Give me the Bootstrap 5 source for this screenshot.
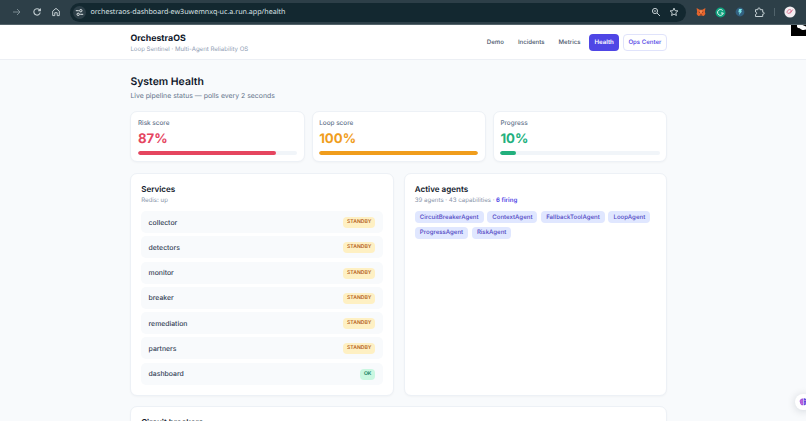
<!DOCTYPE html>
<html lang="en">

<head>
    <meta charset="UTF-8" />
    <meta name="viewport" content="width=device-width, initial-scale=1" />
    <title>OrchestraOS - System Health</title>
    <link href="https://cdn.jsdelivr.net/npm/bootstrap@5.3.3/dist/css/bootstrap.min.css" rel="stylesheet" />
    <style>
        body {
            background: #f8fafc;
            color: #1e293b;
            font-family: Inter, 'Liberation Sans', sans-serif;
            font-size: 7px;
            line-height: 10px;
            height: 421px;
            overflow: hidden;
            text-rendering: geometricPrecision;
        }

        /* Browser toolbar */
        .browser-bar {
            height: 25px;
            background: #2d3f48;
            border-bottom: 1px solid #53636a;
            color: #c3ced2;
        }

        .browser-bar svg {
            display: block;
            flex: none;
        }

        .browser-tools {
            width: 70px;
            padding-left: 11px;
            gap: 9.5px;
        }

        .address-bar {
            width: 616px;
            height: 19px;
            padding: 0 7.5px 0 3px;
            background: #132830;
            border-radius: 10px;
        }

        .site-info {
            width: 13px;
            height: 13px;
            background: #2d3f48;
            border-radius: 50%;
        }

        .url-text {
            margin-left: 4.5px;
            color: #d8e0e3;
            font: 7.13px/12px 'Noto Sans', 'Open Sans', sans-serif;
            white-space: nowrap;
        }

        .extensions {
            padding-left: 10px;
            gap: 9px;
        }

        /* Page header */
        .site-header {
            height: 35px;
            background: #fff;
            border-bottom: 1px solid #eceff4;
        }

        .page-wrap {
            width: 536.8px;
            margin-left: 130.4px;
        }

        .brand-name {
            padding-top: 2px;
            color: #0f172a;
            font-size: 8.8px;
            line-height: 12px;
            font-weight: 700;
        }

        .brand-sub {
            color: #8f9db3;
            font-size: 6.1px;
            line-height: 9px;
        }

        .site-nav {
            gap: 3.6px;
        }

        .site-nav .nav-link {
            color: #475569;
            font-size: 6.1px;
            line-height: 9px;
            font-weight: 500;
            padding: 3px 4.2px;
            border: 1px solid transparent;
            border-radius: 4px;
        }

        .site-nav .nav-link.active {
            background: #4f46e5;
            color: #fff;
            font-weight: 600;
        }

        .site-nav .nav-link.ops-link {
            color: #4f46e5;
            border-color: #e0e3fb;
            padding: 3px 4.8px;
        }

        /* Headings */
        h1 {
            margin: 14px 0 0;
            color: #0f172a;
            font-size: 10.45px;
            line-height: 15px;
            font-weight: 600;
        }

        .lead-line {
            margin-top: 1.5px;
            color: #64748b;
            font-size: 6.9px;
        }

        h2 {
            margin: 0;
            color: #0f172a;
            font-size: 8.05px;
            line-height: 12px;
            font-weight: 600;
        }

        .panel {
            background: #fff;
            border: 1px solid #edf1f6;
            border-radius: 7px;
            box-shadow: 0 1px 2px rgba(15, 23, 42, .03);
        }

        /* Score cards */
        .score-grid {
            display: grid;
            grid-template-columns: repeat(3, 1fr);
            gap: 7px;
            margin-top: 10px;
        }

        .score-card {
            height: 51.5px;
            padding: 7px 6.5px 0;
        }

        .score-label {
            color: #64748b;
            font-size: 6.4px;
            line-height: 9px;
            font-weight: 500;
        }

        .score-value {
            margin-top: 4.5px;
            font-size: 13.2px;
            line-height: 15px;
            font-weight: 700;
        }

        .score-card .progress {
            height: 3.5px;
            margin-top: 4.3px;
            background: #f1f5f9;
            border-radius: 4px;
        }

        .score-card .progress-bar {
            border-radius: 4px;
        }

        .risk { color: #e5455f; }
        .loop { color: #f09d1c; }
        .gain { color: #22b07d; }
        .bg-risk { background: #e5455f; }
        .bg-loop { background: #f09d1c; }
        .bg-gain { background: #22b07d; }

        /* Services and agents */
        .panel-grid {
            display: grid;
            grid-template-columns: 1fr 1fr;
            gap: 10.5px;
            margin-top: 10.5px;
        }

        .panel-grid .panel {
            height: 223px;
            padding: 9.7px 9.8px 0;
        }

        .panel-note {
            margin-top: .8px;
            color: #8794a9;
            font-size: 6.12px;
            line-height: 10px;
        }

        .firing {
            color: #4f46e5;
            font-weight: 600;
        }

        .service-list {
            gap: 3.25px;
            margin-top: 5.1px;
        }

        .service-row {
            height: 22px;
            padding: 1px 7.4px 0;
            background: #f8fafc;
            border-radius: 5px;
            color: #334155;
            font-size: 6.87px;
            font-weight: 500;
        }

        .status-pill {
            padding: 1px 3.9px;
            border-radius: 4px;
            font-size: 5.1px;
            line-height: 9px;
            font-weight: 600;
        }

        .standby {
            background: #fef0c3;
            color: #b4611c;
        }

        .ok {
            background: #c9f7e0;
            color: #047857;
        }

        .agent-list {
            gap: 3.7px;
            margin-top: 5.1px;
        }

        .agent-tag {
            padding: 1.5px 5px;
            background: #e0e7ff;
            border-radius: 4px;
            color: #5148c4;
            font-size: 6.1px;
            line-height: 9px;
            font-weight: 500;
        }

        .circuit-panel {
            height: 60px;
            margin-top: 10.5px;
            padding: 9.3px 9.8px 0;
        }

        /* Widgets floating over the page edge */
        .corner-widget {
            position: absolute;
            top: 25px;
            right: 0;
        }

        .chat-bubble {
            position: absolute;
            top: 394px;
            right: -6px;
            width: 17px;
            height: 16px;
            background: #fff;
            border-radius: 8px;
            box-shadow: 0 1px 9px rgba(15, 23, 42, .16);
        }
    </style>
</head>

<body class="position-relative">

    <div class="browser-bar d-flex align-items-center">
        <div class="browser-tools d-flex align-items-center">
            <svg width="11" height="10" viewBox="0 0 11 10" fill="none" stroke="#83949b" stroke-width=".9"><path d="M2 5h7M6 2l3 3-3 3" /></svg>
            <svg width="10" height="10" viewBox="0 0 10 10" fill="none" stroke="#c3ced2" stroke-width="1.1"><path d="M8.2 5.5A3.2 3.2 0 1 1 7.4 2.7L8.2 3.6M8.4 1.4v2.4H6" /></svg>
            <svg width="10" height="10" viewBox="0 0 10 10" fill="none" stroke="#c3ced2" stroke-width="1"><path d="M1.7 4.1 5 1.4l3.3 2.7v4.5H6.2V5.7H3.8v2.9H1.7z" /></svg>
        </div>
        <div class="address-bar d-flex align-items-center">
            <div class="site-info d-flex align-items-center justify-content-center">
                <svg width="9" height="9" viewBox="0 0 9 9" fill="none" stroke="#e1e8ea" stroke-width="1"><path d="M.8 2.7h3M5.2 6.3h3" /><circle cx="5.8" cy="2.7" r="1.2" /><circle cx="3.2" cy="6.3" r="1.2" /></svg>
            </div>
            <div class="url-text">orchestraos-dashboard-ew3uwemnxq-uc.a.run.app/health</div>
            <div class="d-flex align-items-center gap-2 ms-auto">
                <svg width="10" height="10" viewBox="0 0 10 10" fill="none" stroke="#c3ced2" stroke-width="1"><circle cx="4" cy="4" r="2.6" /><path d="M6 6l3 3M2.8 4h2.4" /></svg>
                <svg width="10" height="10" viewBox="0 0 10 10" fill="none" stroke="#d3dcdf" stroke-width=".9"><path d="M5 1.1l1.1 2.6 2.8.2-2.1 1.9.6 2.7L5 7.1 2.6 8.5l.6-2.7L1.1 3.9l2.8-.2z" /></svg>
            </div>
        </div>
        <div class="extensions d-flex align-items-center">
            <svg width="10" height="10" viewBox="0 0 10 10"><path fill="#e5652d" d="M.6 1l3 1.7h2.8l3-1.7-.5 3.7.5 2.3-1.6 2-2-.5H4.2l-2 .5L.6 7l.5-2.3z" /><path fill="#5b2b20" d="M2.2 4.6l1.7.7-.3.8zM7.8 4.6l-1.7.7.3.8zM4 7.4h2l-.3.9H4.3z" /><path fill="#f2a36e" d="M4.3 3.4h1.4L5.4 6h-.8z" /></svg>
            <svg width="11" height="11" viewBox="0 0 11 11"><circle cx="5.5" cy="5.5" r="5" fill="#11a37f" /><path d="M7.7 3.6A2.9 2.9 0 1 0 8.3 6H6" fill="none" stroke="#e3f5f0" stroke-width="1" /></svg>
            <svg width="10" height="10" viewBox="0 0 10 10"><circle cx="5" cy="5" r="4.4" fill="#32607f" /><path fill="#7de4e9" d="M4 2h3L6 4.2h1.1L4 8l.6-2.8H3.3z" /></svg>
            <svg width="11" height="11" viewBox="0 0 11 11" fill="none" stroke="#c3ced2" stroke-width="1"><path d="M1.5 2.7h2.4V2a1.1 1.1 0 0 1 2.2 0v.7h2.6v2.5h.5a1 1 0 0 1 0 2h-.5v2.3H1.5V7.4a1.2 1.2 0 0 0 0-2.4z" /></svg>
            <svg width="1" height="8" viewBox="0 0 1 8"><path fill="#51636b" d="M0 0h1v8H0z" /></svg>
            <svg width="12" height="12" viewBox="0 0 12 12"><circle cx="6" cy="6" r="5.6" fill="#f3edf1" /><path d="M3 6.8c0-3 3-4 4-2.6s-2.7 4.1-3.5 2.8M6 7.5l2.8-4" fill="none" stroke="#d4587c" stroke-width=".8" /></svg>
        </div>
    </div>

    <header class="site-header">
        <div class="page-wrap d-flex justify-content-between align-items-center h-100">
            <div>
                <div class="brand-name">OrchestraOS</div>
                <div class="brand-sub">Loop Sentinel · Multi-Agent Reliability OS</div>
            </div>
            <nav class="site-nav nav align-items-center">
                <a class="nav-link" href="#">Demo</a>
                <a class="nav-link" href="#">Incidents</a>
                <a class="nav-link" href="#">Metrics</a>
                <a class="nav-link active" href="#">Health</a>
                <a class="nav-link ops-link" href="#">Ops Center</a>
            </nav>
        </div>
    </header>

    <main class="page-wrap">
        <h1>System Health</h1>
        <div class="lead-line">Live pipeline status — polls every 2 seconds</div>

        <section class="score-grid">
            <div class="panel score-card">
                <div class="score-label">Risk score</div>
                <div class="score-value risk">87%</div>
                <div class="progress"><div class="progress-bar bg-risk" style="width: 87%"></div></div>
            </div>
            <div class="panel score-card">
                <div class="score-label">Loop score</div>
                <div class="score-value loop">100%</div>
                <div class="progress"><div class="progress-bar bg-loop" style="width: 100%"></div></div>
            </div>
            <div class="panel score-card">
                <div class="score-label">Progress</div>
                <div class="score-value gain">10%</div>
                <div class="progress"><div class="progress-bar bg-gain" style="width: 10%"></div></div>
            </div>
        </section>

        <section class="panel-grid">
            <div class="panel">
                <h2>Services</h2>
                <div class="panel-note">Redis: up</div>
                <div class="service-list d-flex flex-column">
                    <div class="service-row d-flex align-items-center justify-content-between">collector <span class="status-pill standby">STANDBY</span></div>
                    <div class="service-row d-flex align-items-center justify-content-between">detectors <span class="status-pill standby">STANDBY</span></div>
                    <div class="service-row d-flex align-items-center justify-content-between">monitor <span class="status-pill standby">STANDBY</span></div>
                    <div class="service-row d-flex align-items-center justify-content-between">breaker <span class="status-pill standby">STANDBY</span></div>
                    <div class="service-row d-flex align-items-center justify-content-between">remediation <span class="status-pill standby">STANDBY</span></div>
                    <div class="service-row d-flex align-items-center justify-content-between">partners <span class="status-pill standby">STANDBY</span></div>
                    <div class="service-row d-flex align-items-center justify-content-between">dashboard <span class="status-pill ok">OK</span></div>
                </div>
            </div>
            <div class="panel">
                <h2>Active agents</h2>
                <div class="panel-note">39 agents · 43 capabilities · <span class="firing">6 firing</span></div>
                <div class="agent-list d-flex flex-wrap">
                    <span class="agent-tag">CircuitBreakerAgent</span>
                    <span class="agent-tag">ContextAgent</span>
                    <span class="agent-tag">FallbackToolAgent</span>
                    <span class="agent-tag">LoopAgent</span>
                    <span class="agent-tag">ProgressAgent</span>
                    <span class="agent-tag">RiskAgent</span>
                </div>
            </div>
        </section>

        <section class="panel circuit-panel">
            <h2>Circuit breakers</h2>
        </section>
    </main>

    <svg class="corner-widget" width="15" height="11" viewBox="0 0 15 11"><path fill="#000" d="M0 0h15v11H0z" /><path fill="#fff" d="M6 0c-.4 2.5.8 3.3 2.8 3.2C10 5 12.5 5.5 15 4.6V1.5L11.5 0z" /></svg>

    <div class="chat-bubble d-flex align-items-center">
        <svg class="ms-1" width="12" height="8" viewBox="0 0 12 8"><path fill="#a855d8" d="M3 .5C.8 1 .2 3 1 4.5c.2 2 1.6 3 3 2.8V.4z" /><path fill="#5d4be0" d="M4.6.4C7 0 8 2 7.6 4c0 2.4-1.5 3.7-3 3.3z" /><path d="M1.5 3h2.2M2 5.2h1.8M5 2.5h2M5 5h2" stroke="#e38be2" stroke-width=".6" /></svg>
    </div>

    <script src="https://cdn.jsdelivr.net/npm/bootstrap@5.3.3/dist/js/bootstrap.bundle.min.js"></script>
</body>

</html>
